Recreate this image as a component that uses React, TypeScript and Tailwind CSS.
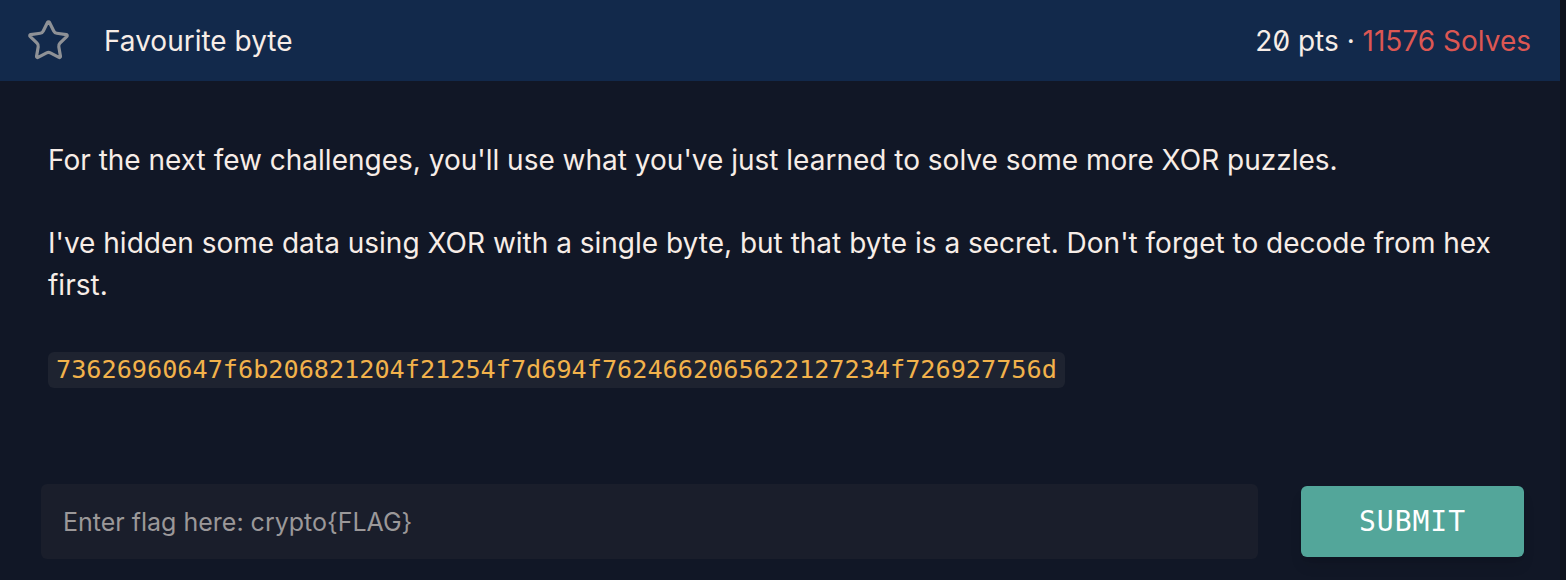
import { Star } from "lucide-react";

const sans = "font-['Inter','Noto_Sans',sans-serif]";
const mono = "font-['DejaVu_Sans_Mono','Liberation_Mono',monospace]";

export default function App() {
  return (
    <div className="flex w-full min-h-[580px] bg-[#0e121d]">
      <div className={`w-[1560px] shrink-0 bg-[#111726] text-[#f7ede7] ${sans}`}>
        {/* header */}
        <div className="flex h-[81px] items-center justify-between bg-[#12294b] pl-[26px] pr-[29px]">
          <div className="flex items-center">
            <Star size={45} strokeWidth={1.7} className="text-[#8e9196]" />
            <span className="ml-[33px] text-[28px]">Favourite byte</span>
          </div>
          <div className="text-[28px] slashed-zero">
            20 pts · <span className="text-[#dc5753]">11576 Solves</span>
          </div>
        </div>

        {/* body */}
        <div className="px-[48px] pt-[58px]">
          <p className="text-[28px] leading-[42px]">
            For the next few challenges, you'll use what you've just learned to solve some more XOR puzzles.
          </p>
          <p className="mt-[41px] text-[28px] leading-[42px]">
            I've hidden some data using XOR with a single byte, but that byte is a secret. Don't forget to decode from hex first.
          </p>
          <div className="mt-[46px] flex">
            <code
              className={`${mono} flex h-[36px] items-center rounded-md bg-[#1e2330] px-[8px] text-[25.2px] text-[#f2b24b]`}
            >
              73626960647f6b206821204f21254f7d694f7624662065622127234f726927756d
            </code>
          </div>
        </div>

        <div className="flex items-center pl-[41px] pr-[36px] pt-[96px] pb-[21px]">
          <input
            className="h-[75px] w-[1217px] rounded-md bg-[#1a1e2b] px-[22px] text-[25px] text-[#f7ede7] outline-none placeholder:text-[#9b9899]"
            placeholder="Enter flag here: crypto{FLAG}"
          />
          <button
            className={`${mono} ml-[43px] h-[71px] w-[223px] rounded-md bg-[#53a69a] text-[28px] tracking-[1px] text-white shadow-lg`}
          >
            SUBMIT
          </button>
        </div>
      </div>
    </div>
  );
}
